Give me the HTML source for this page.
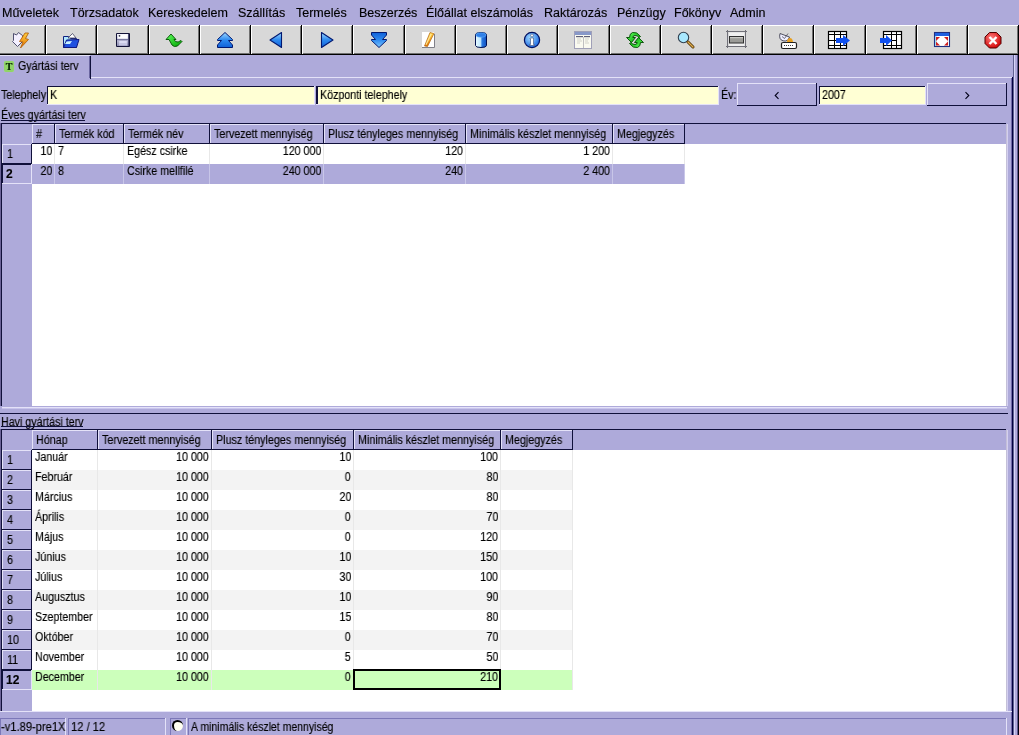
<!DOCTYPE html>
<html><head><meta charset="utf-8">
<style>
html,body{margin:0;padding:0;}
body{width:1019px;height:735px;overflow:hidden;position:relative;background:#AEAADA;font-family:"Liberation Sans",sans-serif;color:#000000;}
.a{position:absolute;}
.t{position:absolute;white-space:pre;line-height:1;will-change:transform;-webkit-text-stroke:0.15px #000;}
</style></head><body>
<div class="t" style="left:2px;top:7px;font-size:12.5px;">Műveletek</div>
<div class="t" style="left:70px;top:7px;font-size:12.5px;">Törzsadatok</div>
<div class="t" style="left:148px;top:7px;font-size:12.5px;">Kereskedelem</div>
<div class="t" style="left:238px;top:7px;font-size:12.5px;">Szállítás</div>
<div class="t" style="left:296px;top:7px;font-size:12.5px;">Termelés</div>
<div class="t" style="left:359px;top:7px;font-size:12.5px;">Beszerzés</div>
<div class="t" style="left:426px;top:7px;font-size:12.5px;">Élőállat elszámolás</div>
<div class="t" style="left:544px;top:7px;font-size:12.5px;">Raktározás</div>
<div class="t" style="left:617px;top:7px;font-size:12.5px;">Pénzügy</div>
<div class="t" style="left:674px;top:7px;font-size:12.5px;">Főkönyv</div>
<div class="t" style="left:730px;top:7px;font-size:12.5px;">Admin</div>
<div class="a" style="left:-5px;top:25px;width:51px;height:30px;background:#D8D8D8;"></div>
<div class="a" style="left:-5px;top:25px;width:51px;height:1px;background:#FFFFFF;"></div>
<div class="a" style="left:-5px;top:25px;width:1px;height:30px;background:#FFFFFF;"></div>
<div class="a" style="left:-4px;top:53px;width:50px;height:1px;background:#707070;"></div>
<div class="a" style="left:44px;top:26px;width:1px;height:28px;background:#707070;"></div>
<div class="a" style="left:-5px;top:54px;width:51px;height:1px;background:#000000;"></div>
<div class="a" style="left:45px;top:25px;width:1px;height:30px;background:#000000;"></div>
<div class="a" style="left:46px;top:25px;width:51px;height:30px;background:#D8D8D8;"></div>
<div class="a" style="left:46px;top:25px;width:51px;height:1px;background:#FFFFFF;"></div>
<div class="a" style="left:46px;top:25px;width:1px;height:30px;background:#FFFFFF;"></div>
<div class="a" style="left:47px;top:53px;width:50px;height:1px;background:#707070;"></div>
<div class="a" style="left:95px;top:26px;width:1px;height:28px;background:#707070;"></div>
<div class="a" style="left:46px;top:54px;width:51px;height:1px;background:#000000;"></div>
<div class="a" style="left:96px;top:25px;width:1px;height:30px;background:#000000;"></div>
<div class="a" style="left:97px;top:25px;width:52px;height:30px;background:#D8D8D8;"></div>
<div class="a" style="left:97px;top:25px;width:52px;height:1px;background:#FFFFFF;"></div>
<div class="a" style="left:97px;top:25px;width:1px;height:30px;background:#FFFFFF;"></div>
<div class="a" style="left:98px;top:53px;width:51px;height:1px;background:#707070;"></div>
<div class="a" style="left:147px;top:26px;width:1px;height:28px;background:#707070;"></div>
<div class="a" style="left:97px;top:54px;width:52px;height:1px;background:#000000;"></div>
<div class="a" style="left:148px;top:25px;width:1px;height:30px;background:#000000;"></div>
<div class="a" style="left:149px;top:25px;width:51px;height:30px;background:#D8D8D8;"></div>
<div class="a" style="left:149px;top:25px;width:51px;height:1px;background:#FFFFFF;"></div>
<div class="a" style="left:149px;top:25px;width:1px;height:30px;background:#FFFFFF;"></div>
<div class="a" style="left:150px;top:53px;width:50px;height:1px;background:#707070;"></div>
<div class="a" style="left:198px;top:26px;width:1px;height:28px;background:#707070;"></div>
<div class="a" style="left:149px;top:54px;width:51px;height:1px;background:#000000;"></div>
<div class="a" style="left:199px;top:25px;width:1px;height:30px;background:#000000;"></div>
<div class="a" style="left:200px;top:25px;width:51px;height:30px;background:#D8D8D8;"></div>
<div class="a" style="left:200px;top:25px;width:51px;height:1px;background:#FFFFFF;"></div>
<div class="a" style="left:200px;top:25px;width:1px;height:30px;background:#FFFFFF;"></div>
<div class="a" style="left:201px;top:53px;width:50px;height:1px;background:#707070;"></div>
<div class="a" style="left:249px;top:26px;width:1px;height:28px;background:#707070;"></div>
<div class="a" style="left:200px;top:54px;width:51px;height:1px;background:#000000;"></div>
<div class="a" style="left:250px;top:25px;width:1px;height:30px;background:#000000;"></div>
<div class="a" style="left:251px;top:25px;width:51px;height:30px;background:#D8D8D8;"></div>
<div class="a" style="left:251px;top:25px;width:51px;height:1px;background:#FFFFFF;"></div>
<div class="a" style="left:251px;top:25px;width:1px;height:30px;background:#FFFFFF;"></div>
<div class="a" style="left:252px;top:53px;width:50px;height:1px;background:#707070;"></div>
<div class="a" style="left:300px;top:26px;width:1px;height:28px;background:#707070;"></div>
<div class="a" style="left:251px;top:54px;width:51px;height:1px;background:#000000;"></div>
<div class="a" style="left:301px;top:25px;width:1px;height:30px;background:#000000;"></div>
<div class="a" style="left:302px;top:25px;width:51px;height:30px;background:#D8D8D8;"></div>
<div class="a" style="left:302px;top:25px;width:51px;height:1px;background:#FFFFFF;"></div>
<div class="a" style="left:302px;top:25px;width:1px;height:30px;background:#FFFFFF;"></div>
<div class="a" style="left:303px;top:53px;width:50px;height:1px;background:#707070;"></div>
<div class="a" style="left:351px;top:26px;width:1px;height:28px;background:#707070;"></div>
<div class="a" style="left:302px;top:54px;width:51px;height:1px;background:#000000;"></div>
<div class="a" style="left:352px;top:25px;width:1px;height:30px;background:#000000;"></div>
<div class="a" style="left:353px;top:25px;width:52px;height:30px;background:#D8D8D8;"></div>
<div class="a" style="left:353px;top:25px;width:52px;height:1px;background:#FFFFFF;"></div>
<div class="a" style="left:353px;top:25px;width:1px;height:30px;background:#FFFFFF;"></div>
<div class="a" style="left:354px;top:53px;width:51px;height:1px;background:#707070;"></div>
<div class="a" style="left:403px;top:26px;width:1px;height:28px;background:#707070;"></div>
<div class="a" style="left:353px;top:54px;width:52px;height:1px;background:#000000;"></div>
<div class="a" style="left:404px;top:25px;width:1px;height:30px;background:#000000;"></div>
<div class="a" style="left:405px;top:25px;width:51px;height:30px;background:#D8D8D8;"></div>
<div class="a" style="left:405px;top:25px;width:51px;height:1px;background:#FFFFFF;"></div>
<div class="a" style="left:405px;top:25px;width:1px;height:30px;background:#FFFFFF;"></div>
<div class="a" style="left:406px;top:53px;width:50px;height:1px;background:#707070;"></div>
<div class="a" style="left:454px;top:26px;width:1px;height:28px;background:#707070;"></div>
<div class="a" style="left:405px;top:54px;width:51px;height:1px;background:#000000;"></div>
<div class="a" style="left:455px;top:25px;width:1px;height:30px;background:#000000;"></div>
<div class="a" style="left:456px;top:25px;width:51px;height:30px;background:#D8D8D8;"></div>
<div class="a" style="left:456px;top:25px;width:51px;height:1px;background:#FFFFFF;"></div>
<div class="a" style="left:456px;top:25px;width:1px;height:30px;background:#FFFFFF;"></div>
<div class="a" style="left:457px;top:53px;width:50px;height:1px;background:#707070;"></div>
<div class="a" style="left:505px;top:26px;width:1px;height:28px;background:#707070;"></div>
<div class="a" style="left:456px;top:54px;width:51px;height:1px;background:#000000;"></div>
<div class="a" style="left:506px;top:25px;width:1px;height:30px;background:#000000;"></div>
<div class="a" style="left:507px;top:25px;width:51px;height:30px;background:#D8D8D8;"></div>
<div class="a" style="left:507px;top:25px;width:51px;height:1px;background:#FFFFFF;"></div>
<div class="a" style="left:507px;top:25px;width:1px;height:30px;background:#FFFFFF;"></div>
<div class="a" style="left:508px;top:53px;width:50px;height:1px;background:#707070;"></div>
<div class="a" style="left:556px;top:26px;width:1px;height:28px;background:#707070;"></div>
<div class="a" style="left:507px;top:54px;width:51px;height:1px;background:#000000;"></div>
<div class="a" style="left:557px;top:25px;width:1px;height:30px;background:#000000;"></div>
<div class="a" style="left:558px;top:25px;width:52px;height:30px;background:#D8D8D8;"></div>
<div class="a" style="left:558px;top:25px;width:52px;height:1px;background:#FFFFFF;"></div>
<div class="a" style="left:558px;top:25px;width:1px;height:30px;background:#FFFFFF;"></div>
<div class="a" style="left:559px;top:53px;width:51px;height:1px;background:#707070;"></div>
<div class="a" style="left:608px;top:26px;width:1px;height:28px;background:#707070;"></div>
<div class="a" style="left:558px;top:54px;width:52px;height:1px;background:#000000;"></div>
<div class="a" style="left:609px;top:25px;width:1px;height:30px;background:#000000;"></div>
<div class="a" style="left:610px;top:25px;width:51px;height:30px;background:#D8D8D8;"></div>
<div class="a" style="left:610px;top:25px;width:51px;height:1px;background:#FFFFFF;"></div>
<div class="a" style="left:610px;top:25px;width:1px;height:30px;background:#FFFFFF;"></div>
<div class="a" style="left:611px;top:53px;width:50px;height:1px;background:#707070;"></div>
<div class="a" style="left:659px;top:26px;width:1px;height:28px;background:#707070;"></div>
<div class="a" style="left:610px;top:54px;width:51px;height:1px;background:#000000;"></div>
<div class="a" style="left:660px;top:25px;width:1px;height:30px;background:#000000;"></div>
<div class="a" style="left:661px;top:25px;width:51px;height:30px;background:#D8D8D8;"></div>
<div class="a" style="left:661px;top:25px;width:51px;height:1px;background:#FFFFFF;"></div>
<div class="a" style="left:661px;top:25px;width:1px;height:30px;background:#FFFFFF;"></div>
<div class="a" style="left:662px;top:53px;width:50px;height:1px;background:#707070;"></div>
<div class="a" style="left:710px;top:26px;width:1px;height:28px;background:#707070;"></div>
<div class="a" style="left:661px;top:54px;width:51px;height:1px;background:#000000;"></div>
<div class="a" style="left:711px;top:25px;width:1px;height:30px;background:#000000;"></div>
<div class="a" style="left:712px;top:25px;width:51px;height:30px;background:#D8D8D8;"></div>
<div class="a" style="left:712px;top:25px;width:51px;height:1px;background:#FFFFFF;"></div>
<div class="a" style="left:712px;top:25px;width:1px;height:30px;background:#FFFFFF;"></div>
<div class="a" style="left:713px;top:53px;width:50px;height:1px;background:#707070;"></div>
<div class="a" style="left:761px;top:26px;width:1px;height:28px;background:#707070;"></div>
<div class="a" style="left:712px;top:54px;width:51px;height:1px;background:#000000;"></div>
<div class="a" style="left:762px;top:25px;width:1px;height:30px;background:#000000;"></div>
<div class="a" style="left:763px;top:25px;width:51px;height:30px;background:#D8D8D8;"></div>
<div class="a" style="left:763px;top:25px;width:51px;height:1px;background:#FFFFFF;"></div>
<div class="a" style="left:763px;top:25px;width:1px;height:30px;background:#FFFFFF;"></div>
<div class="a" style="left:764px;top:53px;width:50px;height:1px;background:#707070;"></div>
<div class="a" style="left:812px;top:26px;width:1px;height:28px;background:#707070;"></div>
<div class="a" style="left:763px;top:54px;width:51px;height:1px;background:#000000;"></div>
<div class="a" style="left:813px;top:25px;width:1px;height:30px;background:#000000;"></div>
<div class="a" style="left:814px;top:25px;width:52px;height:30px;background:#D8D8D8;"></div>
<div class="a" style="left:814px;top:25px;width:52px;height:1px;background:#FFFFFF;"></div>
<div class="a" style="left:814px;top:25px;width:1px;height:30px;background:#FFFFFF;"></div>
<div class="a" style="left:815px;top:53px;width:51px;height:1px;background:#707070;"></div>
<div class="a" style="left:864px;top:26px;width:1px;height:28px;background:#707070;"></div>
<div class="a" style="left:814px;top:54px;width:52px;height:1px;background:#000000;"></div>
<div class="a" style="left:865px;top:25px;width:1px;height:30px;background:#000000;"></div>
<div class="a" style="left:866px;top:25px;width:51px;height:30px;background:#D8D8D8;"></div>
<div class="a" style="left:866px;top:25px;width:51px;height:1px;background:#FFFFFF;"></div>
<div class="a" style="left:866px;top:25px;width:1px;height:30px;background:#FFFFFF;"></div>
<div class="a" style="left:867px;top:53px;width:50px;height:1px;background:#707070;"></div>
<div class="a" style="left:915px;top:26px;width:1px;height:28px;background:#707070;"></div>
<div class="a" style="left:866px;top:54px;width:51px;height:1px;background:#000000;"></div>
<div class="a" style="left:916px;top:25px;width:1px;height:30px;background:#000000;"></div>
<div class="a" style="left:917px;top:25px;width:51px;height:30px;background:#D8D8D8;"></div>
<div class="a" style="left:917px;top:25px;width:51px;height:1px;background:#FFFFFF;"></div>
<div class="a" style="left:917px;top:25px;width:1px;height:30px;background:#FFFFFF;"></div>
<div class="a" style="left:918px;top:53px;width:50px;height:1px;background:#707070;"></div>
<div class="a" style="left:966px;top:26px;width:1px;height:28px;background:#707070;"></div>
<div class="a" style="left:917px;top:54px;width:51px;height:1px;background:#000000;"></div>
<div class="a" style="left:967px;top:25px;width:1px;height:30px;background:#000000;"></div>
<div class="a" style="left:968px;top:25px;width:51px;height:30px;background:#D8D8D8;"></div>
<div class="a" style="left:968px;top:25px;width:51px;height:1px;background:#FFFFFF;"></div>
<div class="a" style="left:968px;top:25px;width:1px;height:30px;background:#FFFFFF;"></div>
<div class="a" style="left:969px;top:53px;width:50px;height:1px;background:#707070;"></div>
<div class="a" style="left:1017px;top:26px;width:1px;height:28px;background:#707070;"></div>
<div class="a" style="left:968px;top:54px;width:51px;height:1px;background:#000000;"></div>
<div class="a" style="left:1018px;top:25px;width:1px;height:30px;background:#000000;"></div>
<svg class="a" style="left:0;top:0" width="1019" height="60" viewBox="0 0 1019 60">
<defs>
<linearGradient id="gb" x1="0" y1="0" x2="0" y2="1"><stop offset="0" stop-color="#9ED8FF"/><stop offset="0.5" stop-color="#2E8AF0"/><stop offset="1" stop-color="#1060D8"/></linearGradient>
<linearGradient id="gbd" x1="0" y1="1" x2="0" y2="0"><stop offset="0" stop-color="#7EC8FF"/><stop offset="0.5" stop-color="#2E8AF0"/><stop offset="1" stop-color="#1060D8"/></linearGradient>
<linearGradient id="gg" x1="0" y1="0" x2="1" y2="1"><stop offset="0" stop-color="#60FF60"/><stop offset="1" stop-color="#00A000"/></linearGradient>
<linearGradient id="go" x1="0" y1="0" x2="0" y2="1"><stop offset="0" stop-color="#FFD040"/><stop offset="1" stop-color="#E07000"/></linearGradient>
<linearGradient id="gf" x1="0" y1="0" x2="0" y2="1"><stop offset="0" stop-color="#F4F4FF"/><stop offset="1" stop-color="#8C8CB0"/></linearGradient>
<radialGradient id="gr" cx="0.4" cy="0.35" r="0.7"><stop offset="0" stop-color="#FF8080"/><stop offset="1" stop-color="#D00000"/></radialGradient>
<radialGradient id="gi" cx="0.4" cy="0.35" r="0.7"><stop offset="0" stop-color="#A8E0FF"/><stop offset="1" stop-color="#1060E0"/></radialGradient>
</defs>
<!-- 1 lightning -->
<path d="M13.5,33.5 L13.5,40.5 L12.5,41.5 L17.5,46.5 L22.5,41.5 L22.5,35.5 L18.5,32.5 L16.5,35 Z" fill="#F4F0FF" stroke="#505070" stroke-width="1"/>
<path d="M25,33 L28.5,33 L25.5,38.5 L28.5,39.5 L20.5,48 L23,42 L19.5,41.5 Z" fill="url(#go)" stroke="#B05800" stroke-width="0.8" stroke-linejoin="round"/>
<!-- 2 folder -->
<path d="M63.5,36.5 L68.5,36.5 L70.5,38.5 L76.5,38.5 L76.5,47.5 L63.5,47.5 Z" fill="#B0E8FF" stroke="#102080" stroke-width="1"/>
<path d="M68,38 L72.5,33.5 L76,38 Z" fill="#FFFFFF" stroke="#404060" stroke-width="0.8"/>
<path d="M66.5,40 L79,39.5 L76.5,47.5 L63.5,47.5 Z" fill="#2050E0" stroke="#101880" stroke-width="1"/>
<path d="M66.5,41.5 L72,41 L70,44 L65,44 Z" fill="#C8F0FF"/>
<!-- 3 floppy -->
<rect x="116" y="33" width="14" height="14" rx="1" fill="#141438"/>
<rect x="117" y="34" width="11" height="12" fill="url(#gf)"/>
<rect x="118" y="34.5" width="9.5" height="4" fill="#FFFFFF"/>
<circle cx="119.5" cy="35.8" r="0.9" fill="#303048"/>
<rect x="117" y="39" width="11" height="1.2" fill="#7878A0"/>
<rect x="119" y="41" width="8" height="4.5" fill="#C8C8E4"/>
<rect x="119.5" y="41.5" width="7" height="1" fill="#F0F0FF"/>
<rect x="128" y="34" width="1" height="12" fill="#505078"/>
<!-- 4 green arrow -->
<path d="M171,34 L166,39.5 L169,39.5 L172,45 Q174,47.5 177.5,46 L182,41.5 L181,40.5 Q178,43 175.5,41.5 L174,39.5 L176,39.5 Z" fill="url(#gg)" stroke="#005000" stroke-width="0.9"/>
<!-- 5 up double -->
<path d="M225,32.5 L232.5,39.5 L232.5,40.5 L228.5,40.5 L232.5,45 L232.5,47.5 L217.5,47.5 L217.5,45 L221.5,40.5 L217.5,40.5 L217.5,39.5 Z" fill="url(#gb)" stroke="#001870" stroke-width="1"/>
<!-- 6 left -->
<path d="M270,40 L281.5,32.5 L281.5,47.5 Z" fill="url(#gb)" stroke="#001870" stroke-width="1.1" stroke-linejoin="round"/>
<!-- 7 right -->
<path d="M333,40 L321.5,32.5 L321.5,47.5 Z" fill="url(#gb)" stroke="#001870" stroke-width="1.1" stroke-linejoin="round"/>
<!-- 8 down double -->
<path d="M379,47.5 L371.5,40.5 L371.5,39.5 L375.5,39.5 L371.5,35 L371.5,32.5 L386.5,32.5 L386.5,35 L382.5,39.5 L386.5,39.5 L386.5,40.5 Z" fill="url(#gbd)" stroke="#001870" stroke-width="1"/>
<!-- 9 pencil page -->
<rect x="422" y="32" width="12" height="16" fill="#FFFFFF"/>
<path d="M434.5,34 L434.5,47.5 L422,47.5" fill="none" stroke="#808088" stroke-width="1"/>
<path d="M430,32.5 L434,33.5 L427.5,46.5 L424.5,46 Z" fill="url(#go)" stroke="#B06818" stroke-width="0.7"/>
<path d="M430.5,33.5 L432,34 L426.5,45 L425.5,44.5 Z" fill="#FFE890"/>
<!-- 10 cylinder -->
<linearGradient id="gcy" x1="0" y1="0" x2="1" y2="0"><stop offset="0" stop-color="#E8FAFF"/><stop offset="0.45" stop-color="#C0E8FF"/><stop offset="0.6" stop-color="#2878E0"/><stop offset="1" stop-color="#1050C0"/></linearGradient>
<path d="M475.5,35 Q475.5,32.5 481,32.5 Q486.5,32.5 486.5,35 L486.5,45.5 Q486.5,47.5 481,47.5 Q475.5,47.5 475.5,45.5 Z" fill="url(#gcy)" stroke="#001050" stroke-width="1"/>
<ellipse cx="481" cy="35" rx="5" ry="2.2" fill="#3080E8" stroke="#60B0FF" stroke-width="0.6"/>
<!-- 11 info -->
<circle cx="532" cy="40" r="7.6" fill="url(#gi)" stroke="#001060" stroke-width="1.2"/>
<path d="M530,38 L533.5,38 L533.5,44.5 L534.5,44.5 L534.5,45.5 L529.5,45.5 L529.5,44.5 L530.5,44.5 L530.5,39 L530,39 Z" fill="#FFFFFF" stroke="#203060" stroke-width="0.5"/>
<circle cx="532" cy="35.5" r="1.4" fill="#FFFFFF" stroke="#203060" stroke-width="0.5"/>
<!-- 12 form -->
<rect x="574.5" y="31.5" width="17" height="17" fill="#FAFAF0" stroke="#A0A0B8" stroke-width="1"/>
<rect x="575" y="32" width="16" height="3" fill="#8898C8"/>
<rect x="576" y="36" width="7" height="1.2" fill="#606078"/>
<rect x="584" y="36" width="6" height="1.2" fill="#606078"/>
<path d="M577,39 h4 M577,41 h5 M577,43 h3 M585,39 h4 M585,41 h3 M585,43 h4" stroke="#C8C8C0" stroke-width="0.8"/>
<rect x="583" y="37" width="1" height="11" fill="#C0C0C0"/>
<!-- 13 refresh -->
<g stroke="#004800" stroke-width="0.9" stroke-linejoin="round" fill="url(#gg)">
<path d="M640.5,36.5 Q637,31.5 632.5,32.5 Q629.5,33.5 629.5,37.5 L626.5,37.5 L631.5,42.5 L635.5,37.5 L632.8,37.5 Q633,35.5 635,35.5 Q637.5,35.5 639,37.5 Z"/>
<path d="M640.5,36.5 Q637,31.5 632.5,32.5 Q629.5,33.5 629.5,37.5 L626.5,37.5 L631.5,42.5 L635.5,37.5 L632.8,37.5 Q633,35.5 635,35.5 Q637.5,35.5 639,37.5 Z" transform="rotate(180 635 40)"/>
</g>
<!-- 14 magnifier -->
<circle cx="683.5" cy="37.5" r="5.2" fill="#A8E8FF" stroke="#304050" stroke-width="1.1"/>
<path d="M688,42 L693,47" stroke="#503000" stroke-width="3" stroke-linecap="round"/>
<path d="M688,42 L693,47" stroke="#E0B050" stroke-width="1.4" stroke-linecap="round"/>
<!-- 15 row -->
<path d="M726,31.5 L747,31.5 M726,46.5 L747,46.5 M727.5,30 L727.5,48 M745.5,30 L745.5,48" stroke="#707078" stroke-width="1"/>
<rect x="729" y="32.5" width="15.5" height="13.5" fill="#F0F0F0"/>
<rect x="729.5" y="36.5" width="14" height="6.5" fill="#9C9C98" stroke="#303030" stroke-width="1"/>
<rect x="730" y="37" width="13" height="1.2" fill="#C8C8C4"/>
<!-- 16 keyboard dish -->
<path d="M780,33.5 L789.5,37 Q788,42 783,40.8 Q778.5,39.5 780,33.5 Z" fill="#EEEEFF" stroke="#404050" stroke-width="0.9"/>
<path d="M782,36.5 L784.5,38.5 L788,33.5" fill="none" stroke="#505060" stroke-width="0.8"/>
<path d="M787,42 Q787.5,38 790,38 Q792.5,38 793,42 Z" fill="#E8A020"/>
<rect x="781.5" y="42.5" width="15" height="6" rx="1.5" fill="#FFFFFF" stroke="#202020" stroke-width="1.2"/>
<path d="M784,45.5 h10" stroke="#404040" stroke-width="1.2" stroke-dasharray="1,1"/>
<!-- 17 grid arrow -->
<rect x="828.5" y="31.5" width="18" height="17" fill="#FFFFFF" stroke="#000" stroke-width="1.2"/>
<path d="M828.5,34.5 H846.5 M828.5,40.5 H846.5 M828.5,45.5 H846.5 M834.5,31.5 V48.5 M840.5,31.5 V48.5" stroke="#000" stroke-width="1"/>
<path d="M836,38 L843,38 L843,35 L850,40.5 L843,46 L843,43 L836,43 Z" fill="#1050F0"/>
<!-- 18 arrow into grid -->
<rect x="883.5" y="31.5" width="18" height="17" fill="#FFFFFF" stroke="#000" stroke-width="1.2"/>
<path d="M883.5,34.5 H901.5 M883.5,45.5 H901.5 M891.5,31.5 V48.5 M896.5,31.5 V48.5 M891.5,40.5 H896.5" stroke="#000" stroke-width="1"/>
<path d="M880,38 L886,38 L886,35 L892,40.5 L886,46 L886,43 L880,43 Z" fill="#1050F0"/>
<!-- 19 red frame -->
<rect x="934.5" y="32.5" width="15" height="14" fill="#FFFFFF" stroke="#203080" stroke-width="1.1"/>
<rect x="935" y="33" width="14" height="3" fill="#2060E0"/>
<rect x="935" y="36" width="1.5" height="10" fill="#A0D8F0"/>
<g fill="#D02020">
<path d="M936,37 L940,37 L936,41 Z"/><path d="M948,37 L944,37 L948,41 Z"/>
<path d="M936,45.5 L940,45.5 L936,41.5 Z"/><path d="M948,45.5 L944,45.5 L948,41.5 Z"/>
</g>
<!-- 20 red X -->
<path d="M989.5,32.5 L996.5,32.5 L1001,37 L1001,43.5 L996.5,48 L989.5,48 L985,43.5 L985,37 Z" fill="url(#gr)" stroke="#500000" stroke-width="1"/>
<path d="M989.5,37 L996.5,44 M996.5,37 L989.5,44" stroke="#FFFFFF" stroke-width="2.4"/>
</svg>

<div class="a" style="left:0px;top:55px;width:90px;height:1px;background:#E4E2F8;"></div>
<div class="a" style="left:89px;top:56px;width:1px;height:22px;background:#6A66A0;"></div>
<div class="a" style="left:90px;top:56px;width:1px;height:23px;background:#10103A;"></div>
<div class="a" style="left:91px;top:77px;width:921px;height:1px;background:#E4E2F8;"></div>
<div class="a" style="left:1006px;top:124px;width:1px;height:282px;background:#C4C0D8;"></div>
<div class="a" style="left:1007px;top:124px;width:1px;height:282px;background:#D4D0F0;"></div>
<div class="a" style="left:1006px;top:430px;width:1px;height:281px;background:#C4C0D8;"></div>
<div class="a" style="left:1007px;top:430px;width:1px;height:281px;background:#D4D0F0;"></div>
<div class="a" style="left:1011px;top:78px;width:1px;height:657px;background:#7068A8;"></div>
<div class="a" style="left:1012px;top:77px;width:1px;height:658px;background:#000040;"></div>
<div class="a" style="left:1013px;top:55px;width:1px;height:680px;background:#606090;"></div>
<div class="a" style="left:1014px;top:55px;width:1px;height:680px;background:#D8D4F8;"></div>
<div class="a" style="left:1017px;top:55px;width:1px;height:680px;background:#605890;"></div>
<div class="a" style="left:1018px;top:55px;width:1px;height:680px;background:#000010;"></div>
<div class="a" style="left:4px;top:61px;width:10px;height:11px;background:#90D468;border-radius:2px;box-shadow:0 0 1px #B0E890"></div>
<div class="t" style="left:4px;top:62px;font-size:10px;font-family:'Liberation Serif',serif;font-weight:bold;color:#002000;width:10px;text-align:center">T</div>
<div class="t" style="left:18px;top:60px;font-size:12px;transform:scaleX(0.89);transform-origin:0 0;">Gyártási terv</div>
<div class="t" style="left:1px;top:89px;font-size:12px;transform:scaleX(0.89);transform-origin:0 0;">Telephely</div>
<div class="a" style="left:47px;top:86px;width:268px;height:19px;background:#FFFFD4;"></div>
<div class="a" style="left:47px;top:86px;width:268px;height:1px;background:#10103A;"></div>
<div class="a" style="left:47px;top:86px;width:1px;height:19px;background:#10103A;"></div>
<div class="a" style="left:47px;top:104px;width:268px;height:1px;background:#E4E2F8;"></div>
<div class="a" style="left:314px;top:86px;width:1px;height:19px;background:#E4E2F8;"></div>
<div class="t" style="left:50px;top:89px;font-size:12px;transform:scaleX(0.89);transform-origin:0 0;">K</div>
<div class="a" style="left:316px;top:86px;width:403px;height:19px;background:#FFFFD4;"></div>
<div class="a" style="left:316px;top:86px;width:403px;height:1px;background:#10103A;"></div>
<div class="a" style="left:316px;top:86px;width:1px;height:19px;background:#10103A;"></div>
<div class="a" style="left:316px;top:104px;width:403px;height:1px;background:#E4E2F8;"></div>
<div class="a" style="left:718px;top:86px;width:1px;height:19px;background:#E4E2F8;"></div>
<div class="a" style="left:317px;top:86px;width:1px;height:18px;background:#10103A;"></div>
<div class="t" style="left:320px;top:89px;font-size:12px;transform:scaleX(0.89);transform-origin:0 0;">Központi telephely</div>
<div class="t" style="left:721px;top:89px;font-size:12px;transform:scaleX(0.89);transform-origin:0 0;">Év:</div>
<div class="a" style="left:737px;top:83px;width:80px;height:23px;background:#AEAADA;"></div>
<div class="a" style="left:737px;top:83px;width:80px;height:1px;background:#E4E2F8;"></div>
<div class="a" style="left:737px;top:83px;width:1px;height:23px;background:#E4E2F8;"></div>
<div class="a" style="left:737px;top:105px;width:80px;height:1px;background:#10103A;"></div>
<div class="a" style="left:816px;top:83px;width:1px;height:23px;background:#10103A;"></div>
<svg class="a" style="left:770px;top:88px" width="14" height="16"><path d="M8.5,4.2 L5.2,7.5 L8.5,10.8" fill="none" stroke="#000018" stroke-width="1.1"/></svg>
<div class="a" style="left:819px;top:86px;width:107px;height:19px;background:#FFFFD4;"></div>
<div class="a" style="left:819px;top:86px;width:107px;height:1px;background:#10103A;"></div>
<div class="a" style="left:819px;top:86px;width:1px;height:19px;background:#10103A;"></div>
<div class="a" style="left:819px;top:104px;width:107px;height:1px;background:#E4E2F8;"></div>
<div class="a" style="left:925px;top:86px;width:1px;height:19px;background:#E4E2F8;"></div>
<div class="t" style="left:822px;top:89px;font-size:12px;transform:scaleX(0.89);transform-origin:0 0;">2007</div>
<div class="a" style="left:927px;top:83px;width:80px;height:23px;background:#AEAADA;"></div>
<div class="a" style="left:927px;top:83px;width:80px;height:1px;background:#E4E2F8;"></div>
<div class="a" style="left:927px;top:83px;width:1px;height:23px;background:#E4E2F8;"></div>
<div class="a" style="left:927px;top:105px;width:80px;height:1px;background:#10103A;"></div>
<div class="a" style="left:1006px;top:83px;width:1px;height:23px;background:#10103A;"></div>
<svg class="a" style="left:960px;top:88px" width="14" height="16"><path d="M5.5,4.2 L8.8,7.5 L5.5,10.8" fill="none" stroke="#000018" stroke-width="1.1"/></svg>
<div class="t" style="left:1px;top:109px;font-size:12px;transform:scaleX(0.89);transform-origin:0 0;">Éves gyártási terv</div>
<div class="a" style="left:1px;top:120px;width:84px;height:1px;background:#10103A;"></div>
<div class="a" style="left:1px;top:123px;width:1005px;height:1px;background:#10103A;"></div>
<div class="a" style="left:1px;top:123px;width:1px;height:283px;background:#10103A;"></div>
<div class="a" style="left:0px;top:123px;width:1px;height:283px;background:#6C6498;"></div>
<div class="a" style="left:2px;top:124px;width:1004px;height:282px;background:#FFFFFF;"></div>
<div class="a" style="left:2px;top:124px;width:1004px;height:20px;background:#AEAADA;"></div>
<div class="a" style="left:2px;top:124px;width:30px;height:282px;background:#AEAADA;"></div>
<div class="a" style="left:32px;top:124px;width:23px;height:1px;background:#E4E2F8;"></div>
<div class="a" style="left:32px;top:124px;width:1px;height:20px;background:#E4E2F8;"></div>
<div class="a" style="left:32px;top:143px;width:23px;height:1px;background:#10103A;"></div>
<div class="a" style="left:54px;top:124px;width:1px;height:20px;background:#10103A;"></div>
<div class="t" style="left:36px;top:128px;font-size:12px;transform:scaleX(0.895);transform-origin:0 0;">#</div>
<div class="a" style="left:55px;top:124px;width:69px;height:1px;background:#E4E2F8;"></div>
<div class="a" style="left:55px;top:124px;width:1px;height:20px;background:#E4E2F8;"></div>
<div class="a" style="left:55px;top:143px;width:69px;height:1px;background:#10103A;"></div>
<div class="a" style="left:123px;top:124px;width:1px;height:20px;background:#10103A;"></div>
<div class="t" style="left:59px;top:128px;font-size:12px;transform:scaleX(0.895);transform-origin:0 0;">Termék kód</div>
<div class="a" style="left:124px;top:124px;width:86px;height:1px;background:#E4E2F8;"></div>
<div class="a" style="left:124px;top:124px;width:1px;height:20px;background:#E4E2F8;"></div>
<div class="a" style="left:124px;top:143px;width:86px;height:1px;background:#10103A;"></div>
<div class="a" style="left:209px;top:124px;width:1px;height:20px;background:#10103A;"></div>
<div class="t" style="left:128px;top:128px;font-size:12px;transform:scaleX(0.895);transform-origin:0 0;">Termék név</div>
<div class="a" style="left:210px;top:124px;width:114px;height:1px;background:#E4E2F8;"></div>
<div class="a" style="left:210px;top:124px;width:1px;height:20px;background:#E4E2F8;"></div>
<div class="a" style="left:210px;top:143px;width:114px;height:1px;background:#10103A;"></div>
<div class="a" style="left:323px;top:124px;width:1px;height:20px;background:#10103A;"></div>
<div class="t" style="left:214px;top:128px;font-size:12px;transform:scaleX(0.895);transform-origin:0 0;">Tervezett mennyiség</div>
<div class="a" style="left:324px;top:124px;width:142px;height:1px;background:#E4E2F8;"></div>
<div class="a" style="left:324px;top:124px;width:1px;height:20px;background:#E4E2F8;"></div>
<div class="a" style="left:324px;top:143px;width:142px;height:1px;background:#10103A;"></div>
<div class="a" style="left:465px;top:124px;width:1px;height:20px;background:#10103A;"></div>
<div class="t" style="left:328px;top:128px;font-size:12px;transform:scaleX(0.895);transform-origin:0 0;">Plusz tényleges mennyiség</div>
<div class="a" style="left:466px;top:124px;width:147px;height:1px;background:#E4E2F8;"></div>
<div class="a" style="left:466px;top:124px;width:1px;height:20px;background:#E4E2F8;"></div>
<div class="a" style="left:466px;top:143px;width:147px;height:1px;background:#10103A;"></div>
<div class="a" style="left:612px;top:124px;width:1px;height:20px;background:#10103A;"></div>
<div class="t" style="left:470px;top:128px;font-size:12px;transform:scaleX(0.895);transform-origin:0 0;">Minimális készlet mennyiség</div>
<div class="a" style="left:613px;top:124px;width:72px;height:1px;background:#E4E2F8;"></div>
<div class="a" style="left:613px;top:124px;width:1px;height:20px;background:#E4E2F8;"></div>
<div class="a" style="left:613px;top:143px;width:72px;height:1px;background:#10103A;"></div>
<div class="a" style="left:684px;top:124px;width:1px;height:20px;background:#10103A;"></div>
<div class="t" style="left:617px;top:128px;font-size:12px;transform:scaleX(0.895);transform-origin:0 0;">Megjegyzés</div>
<div class="a" style="left:32px;top:144px;width:653px;height:20px;background:#FFFFFF;"></div>
<div class="a" style="left:54px;top:144px;width:1px;height:20px;background:#E8E8E8;"></div>
<div class="t" style="right:967px;top:145px;font-size:12px;transform:scaleX(0.89);transform-origin:100% 0;">10</div>
<div class="a" style="left:123px;top:144px;width:1px;height:20px;background:#E8E8E8;"></div>
<div class="t" style="left:58px;top:145px;font-size:12px;transform:scaleX(0.89);transform-origin:0 0;">7</div>
<div class="a" style="left:209px;top:144px;width:1px;height:20px;background:#E8E8E8;"></div>
<div class="t" style="left:127px;top:145px;font-size:12px;transform:scaleX(0.89);transform-origin:0 0;">Egész csirke</div>
<div class="a" style="left:323px;top:144px;width:1px;height:20px;background:#E8E8E8;"></div>
<div class="t" style="right:698px;top:145px;font-size:12px;transform:scaleX(0.89);transform-origin:100% 0;">120 000</div>
<div class="a" style="left:465px;top:144px;width:1px;height:20px;background:#E8E8E8;"></div>
<div class="t" style="right:556px;top:145px;font-size:12px;transform:scaleX(0.89);transform-origin:100% 0;">120</div>
<div class="a" style="left:612px;top:144px;width:1px;height:20px;background:#E8E8E8;"></div>
<div class="t" style="right:409px;top:145px;font-size:12px;transform:scaleX(0.89);transform-origin:100% 0;">1 200</div>
<div class="a" style="left:684px;top:144px;width:1px;height:20px;background:#E8E8E8;"></div>
<div class="a" style="left:2px;top:144px;width:30px;height:20px;background:#AEAADA;"></div>
<div class="a" style="left:2px;top:144px;width:30px;height:1px;background:#E4E2F8;"></div>
<div class="a" style="left:2px;top:144px;width:1px;height:20px;background:#E4E2F8;"></div>
<div class="a" style="left:2px;top:163px;width:30px;height:1px;background:#10103A;"></div>
<div class="a" style="left:31px;top:144px;width:1px;height:20px;background:#10103A;"></div>
<div class="t" style="left:7px;top:148px;font-size:12px;transform:scaleX(0.89);transform-origin:0 0;">1</div>
<div class="a" style="left:32px;top:164px;width:653px;height:20px;background:#AEAADA;"></div>
<div class="a" style="left:54px;top:164px;width:1px;height:20px;background:#C8C6E8;"></div>
<div class="t" style="right:967px;top:165px;font-size:12px;transform:scaleX(0.89);transform-origin:100% 0;">20</div>
<div class="a" style="left:123px;top:164px;width:1px;height:20px;background:#C8C6E8;"></div>
<div class="t" style="left:58px;top:165px;font-size:12px;transform:scaleX(0.89);transform-origin:0 0;">8</div>
<div class="a" style="left:209px;top:164px;width:1px;height:20px;background:#C8C6E8;"></div>
<div class="t" style="left:127px;top:165px;font-size:12px;transform:scaleX(0.89);transform-origin:0 0;">Csirke mellfilé</div>
<div class="a" style="left:323px;top:164px;width:1px;height:20px;background:#C8C6E8;"></div>
<div class="t" style="right:698px;top:165px;font-size:12px;transform:scaleX(0.89);transform-origin:100% 0;">240 000</div>
<div class="a" style="left:465px;top:164px;width:1px;height:20px;background:#C8C6E8;"></div>
<div class="t" style="right:556px;top:165px;font-size:12px;transform:scaleX(0.89);transform-origin:100% 0;">240</div>
<div class="a" style="left:612px;top:164px;width:1px;height:20px;background:#C8C6E8;"></div>
<div class="t" style="right:409px;top:165px;font-size:12px;transform:scaleX(0.89);transform-origin:100% 0;">2 400</div>
<div class="a" style="left:684px;top:164px;width:1px;height:20px;background:#C8C6E8;"></div>
<div class="a" style="left:2px;top:164px;width:30px;height:20px;background:#AEAADA;"></div>
<div class="a" style="left:2px;top:164px;width:30px;height:1px;background:#10103A;"></div>
<div class="a" style="left:2px;top:164px;width:1px;height:20px;background:#10103A;"></div>
<div class="a" style="left:2px;top:183px;width:30px;height:1px;background:#E4E2F8;"></div>
<div class="a" style="left:31px;top:164px;width:1px;height:20px;background:#E4E2F8;"></div>
<div class="t" style="left:6px;top:168px;font-size:12px;transform:scaleX(1.0);transform-origin:0 0;font-weight:bold">2</div>
<div class="a" style="left:2px;top:407px;width:1005px;height:1px;background:#E4E2F8;"></div>
<div class="a" style="left:2px;top:408px;width:1005px;height:1px;background:#C8C4EC;"></div>
<div class="a" style="left:0px;top:413px;width:1008px;height:1px;background:#10103A;"></div>
<div class="t" style="left:1px;top:416px;font-size:12px;transform:scaleX(0.89);transform-origin:0 0;">Havi gyártási terv</div>
<div class="a" style="left:1px;top:426px;width:82px;height:1px;background:#10103A;"></div>
<div class="a" style="left:1px;top:429px;width:1005px;height:1px;background:#10103A;"></div>
<div class="a" style="left:1px;top:429px;width:1px;height:282px;background:#10103A;"></div>
<div class="a" style="left:0px;top:429px;width:1px;height:282px;background:#6C6498;"></div>
<div class="a" style="left:2px;top:430px;width:1004px;height:281px;background:#FFFFFF;"></div>
<div class="a" style="left:2px;top:430px;width:1004px;height:20px;background:#AEAADA;"></div>
<div class="a" style="left:2px;top:430px;width:30px;height:281px;background:#AEAADA;"></div>
<div class="a" style="left:32px;top:430px;width:66px;height:1px;background:#E4E2F8;"></div>
<div class="a" style="left:32px;top:430px;width:1px;height:20px;background:#E4E2F8;"></div>
<div class="a" style="left:32px;top:449px;width:66px;height:1px;background:#10103A;"></div>
<div class="a" style="left:97px;top:430px;width:1px;height:20px;background:#10103A;"></div>
<div class="t" style="left:36px;top:434px;font-size:12px;transform:scaleX(0.895);transform-origin:0 0;">Hónap</div>
<div class="a" style="left:98px;top:430px;width:114px;height:1px;background:#E4E2F8;"></div>
<div class="a" style="left:98px;top:430px;width:1px;height:20px;background:#E4E2F8;"></div>
<div class="a" style="left:98px;top:449px;width:114px;height:1px;background:#10103A;"></div>
<div class="a" style="left:211px;top:430px;width:1px;height:20px;background:#10103A;"></div>
<div class="t" style="left:102px;top:434px;font-size:12px;transform:scaleX(0.895);transform-origin:0 0;">Tervezett mennyiség</div>
<div class="a" style="left:212px;top:430px;width:142px;height:1px;background:#E4E2F8;"></div>
<div class="a" style="left:212px;top:430px;width:1px;height:20px;background:#E4E2F8;"></div>
<div class="a" style="left:212px;top:449px;width:142px;height:1px;background:#10103A;"></div>
<div class="a" style="left:353px;top:430px;width:1px;height:20px;background:#10103A;"></div>
<div class="t" style="left:216px;top:434px;font-size:12px;transform:scaleX(0.895);transform-origin:0 0;">Plusz tényleges mennyiség</div>
<div class="a" style="left:354px;top:430px;width:147px;height:1px;background:#E4E2F8;"></div>
<div class="a" style="left:354px;top:430px;width:1px;height:20px;background:#E4E2F8;"></div>
<div class="a" style="left:354px;top:449px;width:147px;height:1px;background:#10103A;"></div>
<div class="a" style="left:500px;top:430px;width:1px;height:20px;background:#10103A;"></div>
<div class="t" style="left:358px;top:434px;font-size:12px;transform:scaleX(0.895);transform-origin:0 0;">Minimális készlet mennyiség</div>
<div class="a" style="left:501px;top:430px;width:72px;height:1px;background:#E4E2F8;"></div>
<div class="a" style="left:501px;top:430px;width:1px;height:20px;background:#E4E2F8;"></div>
<div class="a" style="left:501px;top:449px;width:72px;height:1px;background:#10103A;"></div>
<div class="a" style="left:572px;top:430px;width:1px;height:20px;background:#10103A;"></div>
<div class="t" style="left:505px;top:434px;font-size:12px;transform:scaleX(0.895);transform-origin:0 0;">Megjegyzés</div>
<div class="a" style="left:32px;top:450px;width:541px;height:20px;background:#FFFFFF;"></div>
<div class="a" style="left:97px;top:450px;width:1px;height:20px;background:#E8E8E8;"></div>
<div class="t" style="left:35px;top:451px;font-size:12px;transform:scaleX(0.89);transform-origin:0 0;">Január</div>
<div class="a" style="left:211px;top:450px;width:1px;height:20px;background:#E8E8E8;"></div>
<div class="t" style="right:810px;top:451px;font-size:12px;transform:scaleX(0.89);transform-origin:100% 0;">10 000</div>
<div class="a" style="left:353px;top:450px;width:1px;height:20px;background:#E8E8E8;"></div>
<div class="t" style="right:668px;top:451px;font-size:12px;transform:scaleX(0.89);transform-origin:100% 0;">10</div>
<div class="a" style="left:500px;top:450px;width:1px;height:20px;background:#E8E8E8;"></div>
<div class="t" style="right:521px;top:451px;font-size:12px;transform:scaleX(0.89);transform-origin:100% 0;">100</div>
<div class="a" style="left:572px;top:450px;width:1px;height:20px;background:#E8E8E8;"></div>
<div class="a" style="left:2px;top:450px;width:30px;height:20px;background:#AEAADA;"></div>
<div class="a" style="left:2px;top:450px;width:30px;height:1px;background:#E4E2F8;"></div>
<div class="a" style="left:2px;top:450px;width:1px;height:20px;background:#E4E2F8;"></div>
<div class="a" style="left:2px;top:469px;width:30px;height:1px;background:#10103A;"></div>
<div class="a" style="left:31px;top:450px;width:1px;height:20px;background:#10103A;"></div>
<div class="t" style="left:7px;top:454px;font-size:12px;transform:scaleX(0.89);transform-origin:0 0;">1</div>
<div class="a" style="left:32px;top:470px;width:541px;height:20px;background:#F3F3F3;"></div>
<div class="a" style="left:97px;top:470px;width:1px;height:20px;background:#E8E8E8;"></div>
<div class="t" style="left:35px;top:471px;font-size:12px;transform:scaleX(0.89);transform-origin:0 0;">Február</div>
<div class="a" style="left:211px;top:470px;width:1px;height:20px;background:#E8E8E8;"></div>
<div class="t" style="right:810px;top:471px;font-size:12px;transform:scaleX(0.89);transform-origin:100% 0;">10 000</div>
<div class="a" style="left:353px;top:470px;width:1px;height:20px;background:#E8E8E8;"></div>
<div class="t" style="right:668px;top:471px;font-size:12px;transform:scaleX(0.89);transform-origin:100% 0;">0</div>
<div class="a" style="left:500px;top:470px;width:1px;height:20px;background:#E8E8E8;"></div>
<div class="t" style="right:521px;top:471px;font-size:12px;transform:scaleX(0.89);transform-origin:100% 0;">80</div>
<div class="a" style="left:572px;top:470px;width:1px;height:20px;background:#E8E8E8;"></div>
<div class="a" style="left:2px;top:470px;width:30px;height:20px;background:#AEAADA;"></div>
<div class="a" style="left:2px;top:470px;width:30px;height:1px;background:#E4E2F8;"></div>
<div class="a" style="left:2px;top:470px;width:1px;height:20px;background:#E4E2F8;"></div>
<div class="a" style="left:2px;top:489px;width:30px;height:1px;background:#10103A;"></div>
<div class="a" style="left:31px;top:470px;width:1px;height:20px;background:#10103A;"></div>
<div class="t" style="left:7px;top:474px;font-size:12px;transform:scaleX(0.89);transform-origin:0 0;">2</div>
<div class="a" style="left:32px;top:490px;width:541px;height:20px;background:#FFFFFF;"></div>
<div class="a" style="left:97px;top:490px;width:1px;height:20px;background:#E8E8E8;"></div>
<div class="t" style="left:35px;top:491px;font-size:12px;transform:scaleX(0.89);transform-origin:0 0;">Március</div>
<div class="a" style="left:211px;top:490px;width:1px;height:20px;background:#E8E8E8;"></div>
<div class="t" style="right:810px;top:491px;font-size:12px;transform:scaleX(0.89);transform-origin:100% 0;">10 000</div>
<div class="a" style="left:353px;top:490px;width:1px;height:20px;background:#E8E8E8;"></div>
<div class="t" style="right:668px;top:491px;font-size:12px;transform:scaleX(0.89);transform-origin:100% 0;">20</div>
<div class="a" style="left:500px;top:490px;width:1px;height:20px;background:#E8E8E8;"></div>
<div class="t" style="right:521px;top:491px;font-size:12px;transform:scaleX(0.89);transform-origin:100% 0;">80</div>
<div class="a" style="left:572px;top:490px;width:1px;height:20px;background:#E8E8E8;"></div>
<div class="a" style="left:2px;top:490px;width:30px;height:20px;background:#AEAADA;"></div>
<div class="a" style="left:2px;top:490px;width:30px;height:1px;background:#E4E2F8;"></div>
<div class="a" style="left:2px;top:490px;width:1px;height:20px;background:#E4E2F8;"></div>
<div class="a" style="left:2px;top:509px;width:30px;height:1px;background:#10103A;"></div>
<div class="a" style="left:31px;top:490px;width:1px;height:20px;background:#10103A;"></div>
<div class="t" style="left:7px;top:494px;font-size:12px;transform:scaleX(0.89);transform-origin:0 0;">3</div>
<div class="a" style="left:32px;top:510px;width:541px;height:20px;background:#F3F3F3;"></div>
<div class="a" style="left:97px;top:510px;width:1px;height:20px;background:#E8E8E8;"></div>
<div class="t" style="left:35px;top:511px;font-size:12px;transform:scaleX(0.89);transform-origin:0 0;">Április</div>
<div class="a" style="left:211px;top:510px;width:1px;height:20px;background:#E8E8E8;"></div>
<div class="t" style="right:810px;top:511px;font-size:12px;transform:scaleX(0.89);transform-origin:100% 0;">10 000</div>
<div class="a" style="left:353px;top:510px;width:1px;height:20px;background:#E8E8E8;"></div>
<div class="t" style="right:668px;top:511px;font-size:12px;transform:scaleX(0.89);transform-origin:100% 0;">0</div>
<div class="a" style="left:500px;top:510px;width:1px;height:20px;background:#E8E8E8;"></div>
<div class="t" style="right:521px;top:511px;font-size:12px;transform:scaleX(0.89);transform-origin:100% 0;">70</div>
<div class="a" style="left:572px;top:510px;width:1px;height:20px;background:#E8E8E8;"></div>
<div class="a" style="left:2px;top:510px;width:30px;height:20px;background:#AEAADA;"></div>
<div class="a" style="left:2px;top:510px;width:30px;height:1px;background:#E4E2F8;"></div>
<div class="a" style="left:2px;top:510px;width:1px;height:20px;background:#E4E2F8;"></div>
<div class="a" style="left:2px;top:529px;width:30px;height:1px;background:#10103A;"></div>
<div class="a" style="left:31px;top:510px;width:1px;height:20px;background:#10103A;"></div>
<div class="t" style="left:7px;top:514px;font-size:12px;transform:scaleX(0.89);transform-origin:0 0;">4</div>
<div class="a" style="left:32px;top:530px;width:541px;height:20px;background:#FFFFFF;"></div>
<div class="a" style="left:97px;top:530px;width:1px;height:20px;background:#E8E8E8;"></div>
<div class="t" style="left:35px;top:531px;font-size:12px;transform:scaleX(0.89);transform-origin:0 0;">Május</div>
<div class="a" style="left:211px;top:530px;width:1px;height:20px;background:#E8E8E8;"></div>
<div class="t" style="right:810px;top:531px;font-size:12px;transform:scaleX(0.89);transform-origin:100% 0;">10 000</div>
<div class="a" style="left:353px;top:530px;width:1px;height:20px;background:#E8E8E8;"></div>
<div class="t" style="right:668px;top:531px;font-size:12px;transform:scaleX(0.89);transform-origin:100% 0;">0</div>
<div class="a" style="left:500px;top:530px;width:1px;height:20px;background:#E8E8E8;"></div>
<div class="t" style="right:521px;top:531px;font-size:12px;transform:scaleX(0.89);transform-origin:100% 0;">120</div>
<div class="a" style="left:572px;top:530px;width:1px;height:20px;background:#E8E8E8;"></div>
<div class="a" style="left:2px;top:530px;width:30px;height:20px;background:#AEAADA;"></div>
<div class="a" style="left:2px;top:530px;width:30px;height:1px;background:#E4E2F8;"></div>
<div class="a" style="left:2px;top:530px;width:1px;height:20px;background:#E4E2F8;"></div>
<div class="a" style="left:2px;top:549px;width:30px;height:1px;background:#10103A;"></div>
<div class="a" style="left:31px;top:530px;width:1px;height:20px;background:#10103A;"></div>
<div class="t" style="left:7px;top:534px;font-size:12px;transform:scaleX(0.89);transform-origin:0 0;">5</div>
<div class="a" style="left:32px;top:550px;width:541px;height:20px;background:#F3F3F3;"></div>
<div class="a" style="left:97px;top:550px;width:1px;height:20px;background:#E8E8E8;"></div>
<div class="t" style="left:35px;top:551px;font-size:12px;transform:scaleX(0.89);transform-origin:0 0;">Június</div>
<div class="a" style="left:211px;top:550px;width:1px;height:20px;background:#E8E8E8;"></div>
<div class="t" style="right:810px;top:551px;font-size:12px;transform:scaleX(0.89);transform-origin:100% 0;">10 000</div>
<div class="a" style="left:353px;top:550px;width:1px;height:20px;background:#E8E8E8;"></div>
<div class="t" style="right:668px;top:551px;font-size:12px;transform:scaleX(0.89);transform-origin:100% 0;">10</div>
<div class="a" style="left:500px;top:550px;width:1px;height:20px;background:#E8E8E8;"></div>
<div class="t" style="right:521px;top:551px;font-size:12px;transform:scaleX(0.89);transform-origin:100% 0;">150</div>
<div class="a" style="left:572px;top:550px;width:1px;height:20px;background:#E8E8E8;"></div>
<div class="a" style="left:2px;top:550px;width:30px;height:20px;background:#AEAADA;"></div>
<div class="a" style="left:2px;top:550px;width:30px;height:1px;background:#E4E2F8;"></div>
<div class="a" style="left:2px;top:550px;width:1px;height:20px;background:#E4E2F8;"></div>
<div class="a" style="left:2px;top:569px;width:30px;height:1px;background:#10103A;"></div>
<div class="a" style="left:31px;top:550px;width:1px;height:20px;background:#10103A;"></div>
<div class="t" style="left:7px;top:554px;font-size:12px;transform:scaleX(0.89);transform-origin:0 0;">6</div>
<div class="a" style="left:32px;top:570px;width:541px;height:20px;background:#FFFFFF;"></div>
<div class="a" style="left:97px;top:570px;width:1px;height:20px;background:#E8E8E8;"></div>
<div class="t" style="left:35px;top:571px;font-size:12px;transform:scaleX(0.89);transform-origin:0 0;">Július</div>
<div class="a" style="left:211px;top:570px;width:1px;height:20px;background:#E8E8E8;"></div>
<div class="t" style="right:810px;top:571px;font-size:12px;transform:scaleX(0.89);transform-origin:100% 0;">10 000</div>
<div class="a" style="left:353px;top:570px;width:1px;height:20px;background:#E8E8E8;"></div>
<div class="t" style="right:668px;top:571px;font-size:12px;transform:scaleX(0.89);transform-origin:100% 0;">30</div>
<div class="a" style="left:500px;top:570px;width:1px;height:20px;background:#E8E8E8;"></div>
<div class="t" style="right:521px;top:571px;font-size:12px;transform:scaleX(0.89);transform-origin:100% 0;">100</div>
<div class="a" style="left:572px;top:570px;width:1px;height:20px;background:#E8E8E8;"></div>
<div class="a" style="left:2px;top:570px;width:30px;height:20px;background:#AEAADA;"></div>
<div class="a" style="left:2px;top:570px;width:30px;height:1px;background:#E4E2F8;"></div>
<div class="a" style="left:2px;top:570px;width:1px;height:20px;background:#E4E2F8;"></div>
<div class="a" style="left:2px;top:589px;width:30px;height:1px;background:#10103A;"></div>
<div class="a" style="left:31px;top:570px;width:1px;height:20px;background:#10103A;"></div>
<div class="t" style="left:7px;top:574px;font-size:12px;transform:scaleX(0.89);transform-origin:0 0;">7</div>
<div class="a" style="left:32px;top:590px;width:541px;height:20px;background:#F3F3F3;"></div>
<div class="a" style="left:97px;top:590px;width:1px;height:20px;background:#E8E8E8;"></div>
<div class="t" style="left:35px;top:591px;font-size:12px;transform:scaleX(0.89);transform-origin:0 0;">Augusztus</div>
<div class="a" style="left:211px;top:590px;width:1px;height:20px;background:#E8E8E8;"></div>
<div class="t" style="right:810px;top:591px;font-size:12px;transform:scaleX(0.89);transform-origin:100% 0;">10 000</div>
<div class="a" style="left:353px;top:590px;width:1px;height:20px;background:#E8E8E8;"></div>
<div class="t" style="right:668px;top:591px;font-size:12px;transform:scaleX(0.89);transform-origin:100% 0;">10</div>
<div class="a" style="left:500px;top:590px;width:1px;height:20px;background:#E8E8E8;"></div>
<div class="t" style="right:521px;top:591px;font-size:12px;transform:scaleX(0.89);transform-origin:100% 0;">90</div>
<div class="a" style="left:572px;top:590px;width:1px;height:20px;background:#E8E8E8;"></div>
<div class="a" style="left:2px;top:590px;width:30px;height:20px;background:#AEAADA;"></div>
<div class="a" style="left:2px;top:590px;width:30px;height:1px;background:#E4E2F8;"></div>
<div class="a" style="left:2px;top:590px;width:1px;height:20px;background:#E4E2F8;"></div>
<div class="a" style="left:2px;top:609px;width:30px;height:1px;background:#10103A;"></div>
<div class="a" style="left:31px;top:590px;width:1px;height:20px;background:#10103A;"></div>
<div class="t" style="left:7px;top:594px;font-size:12px;transform:scaleX(0.89);transform-origin:0 0;">8</div>
<div class="a" style="left:32px;top:610px;width:541px;height:20px;background:#FFFFFF;"></div>
<div class="a" style="left:97px;top:610px;width:1px;height:20px;background:#E8E8E8;"></div>
<div class="t" style="left:35px;top:611px;font-size:12px;transform:scaleX(0.89);transform-origin:0 0;">Szeptember</div>
<div class="a" style="left:211px;top:610px;width:1px;height:20px;background:#E8E8E8;"></div>
<div class="t" style="right:810px;top:611px;font-size:12px;transform:scaleX(0.89);transform-origin:100% 0;">10 000</div>
<div class="a" style="left:353px;top:610px;width:1px;height:20px;background:#E8E8E8;"></div>
<div class="t" style="right:668px;top:611px;font-size:12px;transform:scaleX(0.89);transform-origin:100% 0;">15</div>
<div class="a" style="left:500px;top:610px;width:1px;height:20px;background:#E8E8E8;"></div>
<div class="t" style="right:521px;top:611px;font-size:12px;transform:scaleX(0.89);transform-origin:100% 0;">80</div>
<div class="a" style="left:572px;top:610px;width:1px;height:20px;background:#E8E8E8;"></div>
<div class="a" style="left:2px;top:610px;width:30px;height:20px;background:#AEAADA;"></div>
<div class="a" style="left:2px;top:610px;width:30px;height:1px;background:#E4E2F8;"></div>
<div class="a" style="left:2px;top:610px;width:1px;height:20px;background:#E4E2F8;"></div>
<div class="a" style="left:2px;top:629px;width:30px;height:1px;background:#10103A;"></div>
<div class="a" style="left:31px;top:610px;width:1px;height:20px;background:#10103A;"></div>
<div class="t" style="left:7px;top:614px;font-size:12px;transform:scaleX(0.89);transform-origin:0 0;">9</div>
<div class="a" style="left:32px;top:630px;width:541px;height:20px;background:#F3F3F3;"></div>
<div class="a" style="left:97px;top:630px;width:1px;height:20px;background:#E8E8E8;"></div>
<div class="t" style="left:35px;top:631px;font-size:12px;transform:scaleX(0.89);transform-origin:0 0;">Október</div>
<div class="a" style="left:211px;top:630px;width:1px;height:20px;background:#E8E8E8;"></div>
<div class="t" style="right:810px;top:631px;font-size:12px;transform:scaleX(0.89);transform-origin:100% 0;">10 000</div>
<div class="a" style="left:353px;top:630px;width:1px;height:20px;background:#E8E8E8;"></div>
<div class="t" style="right:668px;top:631px;font-size:12px;transform:scaleX(0.89);transform-origin:100% 0;">0</div>
<div class="a" style="left:500px;top:630px;width:1px;height:20px;background:#E8E8E8;"></div>
<div class="t" style="right:521px;top:631px;font-size:12px;transform:scaleX(0.89);transform-origin:100% 0;">70</div>
<div class="a" style="left:572px;top:630px;width:1px;height:20px;background:#E8E8E8;"></div>
<div class="a" style="left:2px;top:630px;width:30px;height:20px;background:#AEAADA;"></div>
<div class="a" style="left:2px;top:630px;width:30px;height:1px;background:#E4E2F8;"></div>
<div class="a" style="left:2px;top:630px;width:1px;height:20px;background:#E4E2F8;"></div>
<div class="a" style="left:2px;top:649px;width:30px;height:1px;background:#10103A;"></div>
<div class="a" style="left:31px;top:630px;width:1px;height:20px;background:#10103A;"></div>
<div class="t" style="left:7px;top:634px;font-size:12px;transform:scaleX(0.89);transform-origin:0 0;">10</div>
<div class="a" style="left:32px;top:650px;width:541px;height:20px;background:#FFFFFF;"></div>
<div class="a" style="left:97px;top:650px;width:1px;height:20px;background:#E8E8E8;"></div>
<div class="t" style="left:35px;top:651px;font-size:12px;transform:scaleX(0.89);transform-origin:0 0;">November</div>
<div class="a" style="left:211px;top:650px;width:1px;height:20px;background:#E8E8E8;"></div>
<div class="t" style="right:810px;top:651px;font-size:12px;transform:scaleX(0.89);transform-origin:100% 0;">10 000</div>
<div class="a" style="left:353px;top:650px;width:1px;height:20px;background:#E8E8E8;"></div>
<div class="t" style="right:668px;top:651px;font-size:12px;transform:scaleX(0.89);transform-origin:100% 0;">5</div>
<div class="a" style="left:500px;top:650px;width:1px;height:20px;background:#E8E8E8;"></div>
<div class="t" style="right:521px;top:651px;font-size:12px;transform:scaleX(0.89);transform-origin:100% 0;">50</div>
<div class="a" style="left:572px;top:650px;width:1px;height:20px;background:#E8E8E8;"></div>
<div class="a" style="left:2px;top:650px;width:30px;height:20px;background:#AEAADA;"></div>
<div class="a" style="left:2px;top:650px;width:30px;height:1px;background:#E4E2F8;"></div>
<div class="a" style="left:2px;top:650px;width:1px;height:20px;background:#E4E2F8;"></div>
<div class="a" style="left:2px;top:669px;width:30px;height:1px;background:#10103A;"></div>
<div class="a" style="left:31px;top:650px;width:1px;height:20px;background:#10103A;"></div>
<div class="t" style="left:7px;top:654px;font-size:12px;transform:scaleX(0.89);transform-origin:0 0;">11</div>
<div class="a" style="left:32px;top:670px;width:541px;height:20px;background:#CCFFBB;"></div>
<div class="a" style="left:97px;top:670px;width:1px;height:20px;background:#E8E8E8;"></div>
<div class="t" style="left:35px;top:671px;font-size:12px;transform:scaleX(0.89);transform-origin:0 0;">December</div>
<div class="a" style="left:211px;top:670px;width:1px;height:20px;background:#E8E8E8;"></div>
<div class="t" style="right:810px;top:671px;font-size:12px;transform:scaleX(0.89);transform-origin:100% 0;">10 000</div>
<div class="a" style="left:353px;top:670px;width:1px;height:20px;background:#E8E8E8;"></div>
<div class="t" style="right:668px;top:671px;font-size:12px;transform:scaleX(0.89);transform-origin:100% 0;">0</div>
<div class="a" style="left:500px;top:670px;width:1px;height:20px;background:#E8E8E8;"></div>
<div class="t" style="right:521px;top:671px;font-size:12px;transform:scaleX(0.89);transform-origin:100% 0;">210</div>
<div class="a" style="left:572px;top:670px;width:1px;height:20px;background:#E8E8E8;"></div>
<div class="a" style="left:2px;top:670px;width:30px;height:20px;background:#AEAADA;"></div>
<div class="a" style="left:2px;top:670px;width:30px;height:1px;background:#10103A;"></div>
<div class="a" style="left:2px;top:670px;width:1px;height:20px;background:#10103A;"></div>
<div class="a" style="left:2px;top:689px;width:30px;height:1px;background:#E4E2F8;"></div>
<div class="a" style="left:31px;top:670px;width:1px;height:20px;background:#E4E2F8;"></div>
<div class="t" style="left:6px;top:674px;font-size:12px;transform:scaleX(1.0);transform-origin:0 0;font-weight:bold">12</div>
<div class="a" style="left:353px;top:669px;width:148px;height:21px;box-sizing:border-box;border:2px solid #000"></div>
<div class="a" style="left:0px;top:711px;width:1012px;height:1px;background:#E4E2F8;"></div>
<div class="a" style="left:0px;top:718px;width:66px;height:17px;background:#AEAADA;"></div>
<div class="a" style="left:0px;top:718px;width:66px;height:1px;background:#7C78B8;"></div>
<div class="a" style="left:0px;top:718px;width:1px;height:17px;background:#7C78B8;"></div>
<div class="a" style="left:65px;top:718px;width:1px;height:17px;background:#E4E2F8;"></div>
<div class="t" style="left:1px;top:721px;font-size:12px;transform:scaleX(0.93);transform-origin:0 0;">-v1.89-pre1X</div>
<div class="a" style="left:68px;top:718px;width:98px;height:17px;background:#AEAADA;"></div>
<div class="a" style="left:68px;top:718px;width:98px;height:1px;background:#7C78B8;"></div>
<div class="a" style="left:68px;top:718px;width:1px;height:17px;background:#7C78B8;"></div>
<div class="a" style="left:165px;top:718px;width:1px;height:17px;background:#E4E2F8;"></div>
<div class="t" style="left:71px;top:721px;font-size:12px;transform:scaleX(0.93);transform-origin:0 0;">12 / 12</div>
<div class="a" style="left:170px;top:718px;width:17px;height:17px;background:#AEAADA;"></div>
<div class="a" style="left:170px;top:718px;width:17px;height:1px;background:#7C78B8;"></div>
<div class="a" style="left:170px;top:718px;width:1px;height:17px;background:#7C78B8;"></div>
<div class="a" style="left:186px;top:718px;width:1px;height:17px;background:#E4E2F8;"></div>
<div class="a" style="left:172px;top:720px;width:11px;height:11px;border-radius:50%;background:#FFFFF0;border-left:2px solid #000;border-top:2px solid #000;box-sizing:border-box"></div>
<div class="a" style="left:188px;top:718px;width:819px;height:17px;background:#AEAADA;"></div>
<div class="a" style="left:188px;top:718px;width:819px;height:1px;background:#7C78B8;"></div>
<div class="a" style="left:188px;top:718px;width:1px;height:17px;background:#7C78B8;"></div>
<div class="a" style="left:1006px;top:718px;width:1px;height:17px;background:#E4E2F8;"></div>
<div class="t" style="left:191px;top:721px;font-size:12px;transform:scaleX(0.875);transform-origin:0 0;">A minimális készlet mennyiség</div>
</body></html>
